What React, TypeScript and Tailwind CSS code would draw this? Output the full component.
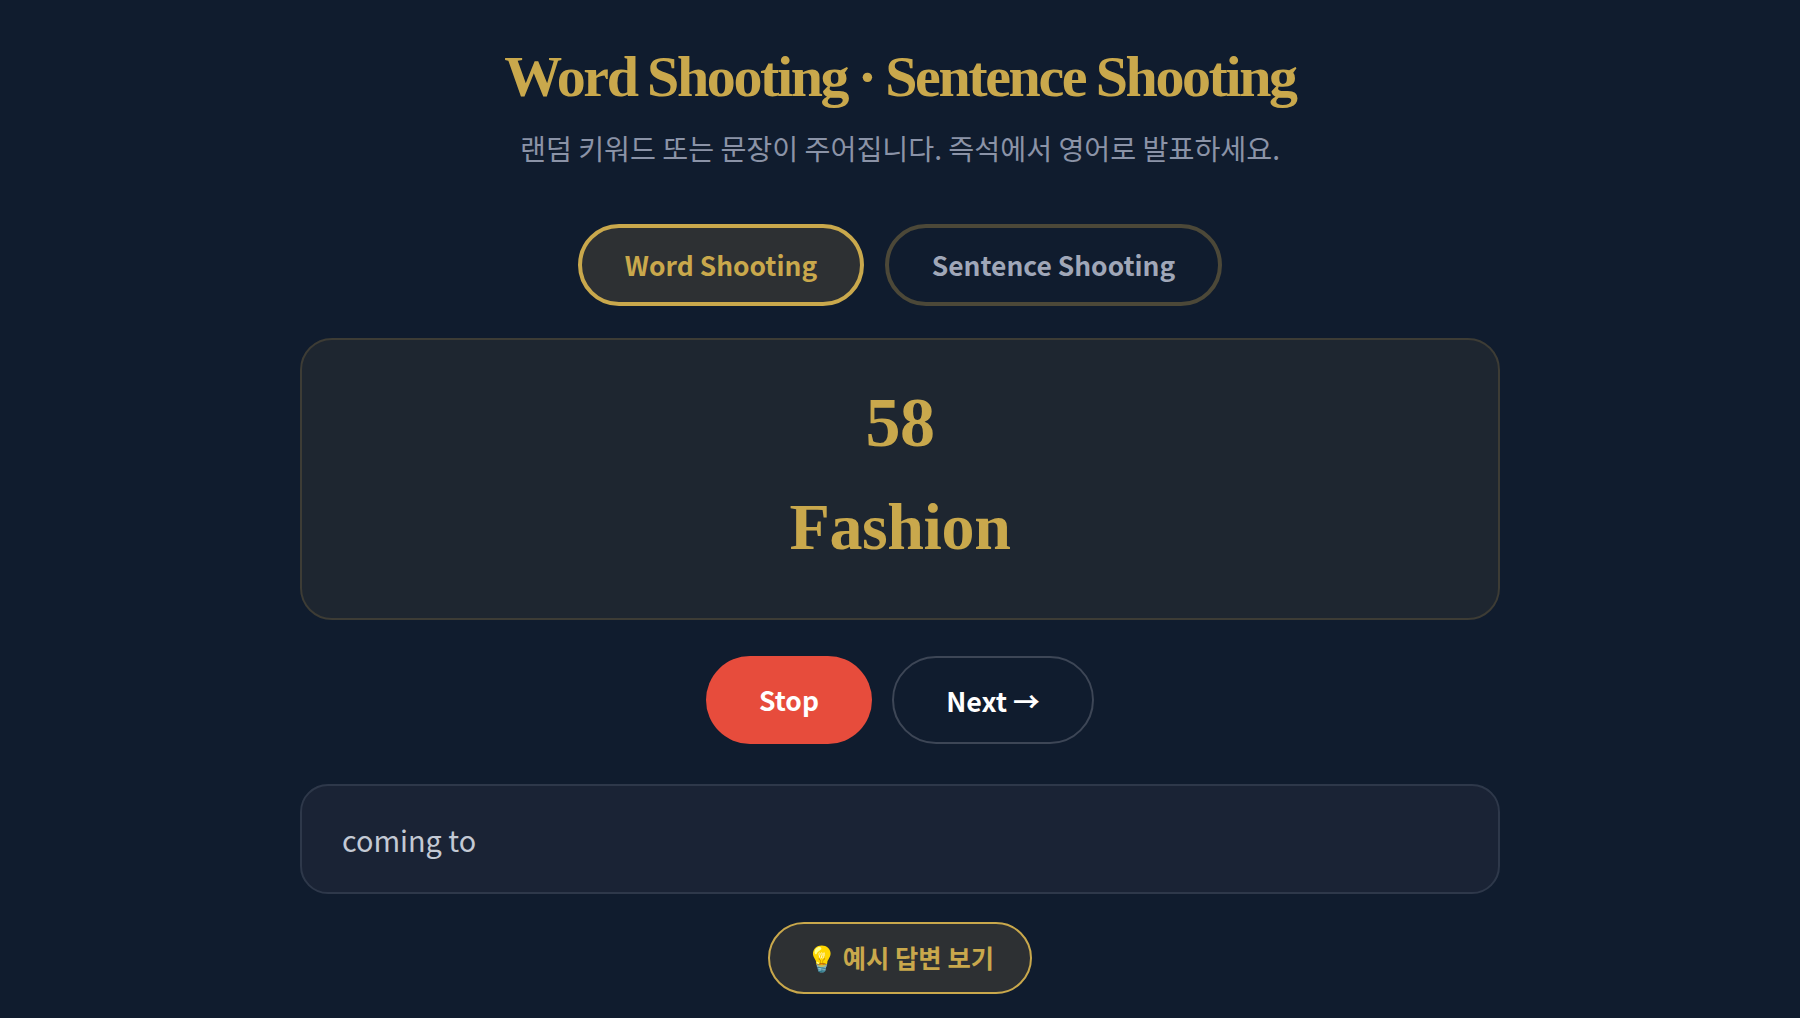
const sans = "font-['Noto_Sans_CJK_KR','Noto_Sans',sans-serif]"

export default function App() {
  return (
    <div className={`min-h-screen h-[1018px] overflow-hidden bg-[#101c2e] ${sans}`}>
      <div className="mx-auto flex w-[1200px] flex-col items-center pt-[44px]">
        <h1 className="font-['Liberation_Serif',serif] text-[58px] font-bold leading-[66px] tracking-[-2.4px] [word-spacing:-1.5px] text-[#c9a84c]">
          Word Shooting · Sentence Shooting
        </h1>
        <p className="mt-[17px] text-[28.2px] leading-[42px] text-[#8b93a7]">
          랜덤 키워드 또는 문장이 주어집니다. 즉석에서 영어로 발표하세요.
        </p>

        <div className="mt-[55px] flex gap-[21px]">
          <button className="h-[82px] w-[286px] rounded-full border-4 border-[#c9a84c] bg-[#2d3033] text-[26.4px] font-semibold text-[#c9a84c]">
            Word Shooting
          </button>
          <button className="h-[82px] w-[337px] rounded-full border-4 border-[#4c4838] text-[26.4px] font-semibold text-[#a0a7b8]">
            Sentence Shooting
          </button>
        </div>

        <div className="mt-[32px] flex h-[282px] w-full flex-col items-center rounded-[32px] border-2 border-[#3d3c35] bg-[#1e2630] pt-[43px] font-['Liberation_Serif',serif] font-bold text-[#c9a84c]">
          <div className="text-[70px] leading-[80px] tracking-[-0.5px]">58</div>
          <div className="mt-[24px] text-[66px] leading-[80px] tracking-[-0.4px]">Fashion</div>
        </div>

        <div className="mt-[36px] flex gap-[20px]">
          <button className="h-[88px] w-[166px] rounded-full bg-[#e74c3c] text-[26.4px] font-bold text-white">Stop</button>
          <button className="h-[88px] w-[202px] rounded-full border-2 border-[#3d4656] pt-[2px] text-[26.8px] font-bold text-white">Next →</button>
        </div>

        <div className="mt-[40px] flex h-[110px] w-full items-center rounded-[28px] border-2 border-[#2e384a] bg-[#1a2335] px-[40px] pt-[2px] text-[28.8px] text-[#c3c9d4]">
          coming to
        </div>

        <button className="mt-[28px] flex h-[72px] w-[264px] items-center justify-center rounded-full border-2 border-[#c9a84c] bg-[#2d3033] text-[25.3px] font-semibold text-[#c9a84c]">
          💡 예시 답변 보기
        </button>
      </div>
    </div>
  )
}
